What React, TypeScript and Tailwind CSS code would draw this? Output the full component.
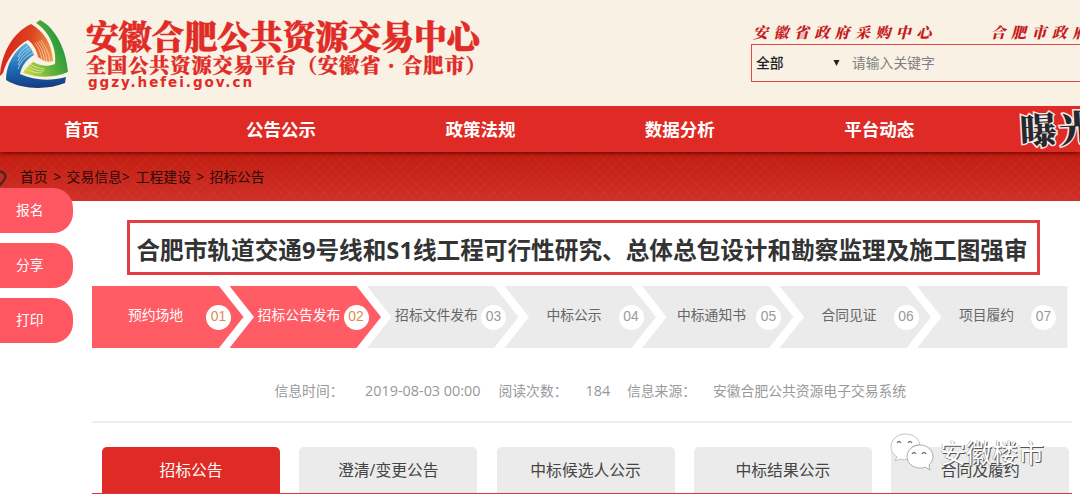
import React from 'react';
import clsx from 'clsx';

interface Step {
  label: string;
  num: string;
  active?: boolean;
}

const navItems = ['首页', '公告公示', '政策法规', '数据分析', '平台动态'];

const sideItems = ['报名', '分享', '打印'];

const steps: Step[] = [
  { label: '预约场地', num: '01', active: true },
  { label: '招标公告发布', num: '02', active: true },
  { label: '招标文件发布', num: '03' },
  { label: '中标公示', num: '04' },
  { label: '中标通知书', num: '05' },
  { label: '合同见证', num: '06' },
  { label: '项目履约', num: '07' }
];

const tabs = ['招标公告', '澄清/变更公告', '中标候选人公示', '中标结果公示', '合同及履约'];

const Logo: React.FC = () => (
  <svg width="70" height="72" viewBox="0 0 70 72" className="shrink-0">
    <defs>
      <linearGradient id="red" x1="0" y1="0.6" x2="1" y2="0.8">
        <stop offset="0" stopColor="#d6221c" />
        <stop offset="0.5" stopColor="#dd4420" />
        <stop offset="1" stopColor="#f2a048" />
      </linearGradient>
      <linearGradient id="green" x1="0" y1="0.9" x2="1" y2="0.3">
        <stop offset="0" stopColor="#cfd83e" />
        <stop offset="0.5" stopColor="#5db03a" />
        <stop offset="1" stopColor="#0f8f3c" />
      </linearGradient>
      <linearGradient id="blue" x1="0.4" y1="0" x2="0.5" y2="1">
        <stop offset="0" stopColor="#5db4e4" />
        <stop offset="0.5" stopColor="#1f70b8" />
        <stop offset="1" stopColor="#123a82" />
      </linearGradient>
    </defs>
    <path
      d="M36 4 L40 1 C54 8 66 28 68 53 C55 59 38 59 23 54 C25 50 29 46 33 43 C40 47 48 48 55 45 C57 31 50 13 36 4Z"
      fill="url(#green)"
    />
    <path
      d="M0 57 C1 36 12 14 31 5 C45 13 52 26 53 42 C48 44 43 42 38 38 C37 31 33 25 28 21 C16 27 7 40 3 54Z"
      fill="url(#red)"
    />
    <path
      d="M26 24 C30 27 32 31 34 36 C27 40 22 46 20 55 C35 62 51 62 66 58 L65 64 C48 71 22 71 6 61 C6 46 14 32 26 24Z"
      fill="url(#blue)"
    />
    <g stroke="#f9f1e4" strokeWidth="0.6" fill="none">
      <path d="M35 24 C39 29 41 35 42 41" />
      <path d="M37 23 C42 29 43 35 45 42" />
      <path d="M39 22 C44 28 46 35 47 43" />
      <path d="M41 21 C46 28 49 35 50 43" />
      <path d="M18 38 C20 33 24 29 28 27" />
      <path d="M18 42 C20 36 25 32 30 29" />
      <path d="M18 46 C21 39 25 35 31 31" />
      <path d="M18 50 C21 42 26 37 33 34" />
      <path d="M30 45 C35 48 40 50 45 50" />
      <path d="M28 47 C34 51 39 52 44 52" />
      <path d="M26 50 C32 53 37 54 42 54" />
    </g>
  </svg>
);

const Header: React.FC = () => (
  <header className="flex h-[106px] bg-[#f9f1e4]">
    <div className="w-[86px] pt-[19px]">
      <Logo />
    </div>
    <div className="flex w-[665px] flex-col pt-[16px] font-['Noto_Serif_CJK_SC','Noto_Sans_CJK_SC',serif] font-black text-[#e02b26]">
      <h1 className="text-[32.8px] leading-[38px] [-webkit-text-stroke:0.6px_#e02b26]">安徽合肥公共资源交易中心</h1>
      <div className="flex text-[20.2px] leading-[22px] tracking-[0.9px] [-webkit-text-stroke:0.3px_#e02b26]">
        <span>全国公共资源交易平台（安徽省</span>
        <span className="w-[21px] text-center">·</span>
        <span>合肥市）</span>
      </div>
      <p className="pl-[2px] font-['DejaVu_Sans'] text-[13.5px] leading-[12px] font-bold tracking-[1.95px]">
        ggzy.hefei.gov.cn
      </p>
    </div>
    <div className="flex w-[329px] flex-col overflow-hidden pt-[22px]">
      <div className="flex h-[22px] gap-[54px] pl-[2px] font-['Noto_Serif_CJK_SC','Noto_Sans_CJK_SC',serif] text-[15px] leading-[20px] font-black tracking-[5.4px] whitespace-nowrap text-[#c71a1c] italic">
        <span>安徽省政府采购中心</span>
        <span>合肥市政府采购</span>
      </div>
      <div className="flex h-[38px] w-[400px] items-center border border-solid border-[#e0474a] pl-[4px] text-[13.8px]">
        <span className="w-[77px] font-medium text-[#222]">全部</span>
        <svg width="7" height="6" viewBox="0 0 7 6">
          <path d="M0.5 0H6.5L3.5 6Z" fill="#222" />
        </svg>
        <span className="pl-[12px] text-[#808080]">请输入关键字</span>
      </div>
    </div>
  </header>
);

const Nav: React.FC = () => (
  <nav className="relative z-10 flex h-[46px] overflow-hidden bg-[#df2a25] shadow-[0_3px_3px_-1px_#7d0d07]">
    <div className="-ml-[18px] flex shrink-0">
      {navItems.map((item) => (
        <a key={item} className="flex w-[199.4px] items-center justify-center pt-px text-[17.5px] font-bold text-white">
          {item}
        </a>
      ))}
    </div>
    <span className="ml-[41px] shrink-0 -rotate-3 font-['Noto_Serif_CJK_SC','Noto_Sans_CJK_SC',serif] text-[37px] leading-[42px] font-black tracking-[2px] text-[#26282b] [-webkit-text-stroke:3px_#f7e9e6] [paint-order:stroke_fill]">
      曝光
    </span>
  </nav>
);

const Breadcrumb: React.FC = () => (
  <div className="flex h-[49px] items-center bg-[repeating-linear-gradient(45deg,#ffffff06_0_1px,transparent_1px_6px),repeating-linear-gradient(-45deg,#ffffff06_0_1px,transparent_1px_6px),linear-gradient(#c21c10,#cf3027)] pt-[2px] text-[13.8px] text-[#2a0805]">
    <svg width="20" height="20" viewBox="0 0 20 20" className="shrink-0">
      <path d="M-6 8 A6 6 0 0 1 5.5 8 C5.5 12 2 14 -1 18" fill="none" stroke="#4a2522" strokeWidth="2.4" />
    </svg>
    <span>首页</span>
    <span className="w-[19px] text-center">&gt;</span>
    <span>交易信息</span>
    <span className="w-[14px]">&gt;</span>
    <span>工程建设</span>
    <span className="w-[18.5px] text-center">&gt;</span>
    <span>招标公告</span>
  </div>
);

const SideButtons: React.FC = () => (
  <aside className="absolute top-[188px] left-0 z-20 flex flex-col gap-[10px]">
    {sideItems.map((item) => (
      <button
        key={item}
        className="h-[45px] w-[73px] rounded-r-[20px] bg-[#ff5761] pl-[16px] text-left text-[13.8px] text-white"
      >
        {item}
      </button>
    ))}
  </aside>
);

const StepItem: React.FC<{ step: Step; index: number }> = ({ step, index }) => {
  const first = index === 0;
  const last = index === steps.length - 1;

  return (
    <li
      className={clsx(
        'relative -mr-[14px] flex h-[62px] w-[151.5px] shrink-0 items-center',
        step.active ? 'bg-[#ff5c66] text-white' : 'bg-[#ebebeb] text-[#666]',
        first && '[clip-path:polygon(0_0,127px_0,151.5px_50%,127px_100%,0_100%)]',
        last && '[clip-path:polygon(0_0,150.5px_0,150.5px_100%,0_100%,24.5px_50%)]',
        !first && !last && '[clip-path:polygon(0_0,127px_0,151.5px_50%,127px_100%,0_100%,24.5px_50%)]'
      )}
    >
      <span
        className={clsx(
          'pb-[3px] text-center text-[13.8px] whitespace-nowrap',
          first ? 'mr-[-13px] w-[127px]' : 'mr-[-25px] w-[139px]'
        )}
      >
        {step.label}
      </span>
      <span
        className={clsx(
          "flex h-[25px] w-[25px] items-center justify-center rounded-full bg-white font-['Liberation_Sans'] text-[13.8px]",
          step.active ? 'text-[#df8a4e]' : 'text-[#999]'
        )}
      >
        {step.num}
      </span>
    </li>
  );
};

const Meta: React.FC = () => (
  <div className="mt-[27px] flex h-[48px] border-b-2 border-solid border-[#eee] pl-[182.5px] text-[13.8px] leading-[32px] whitespace-nowrap text-[#999]">
    <span className="w-[90.5px]">信息时间：</span>
    <span className="w-[133.5px] text-[14.4px]">2019-08-03 00:00</span>
    <span className="w-[87px]">阅读次数：</span>
    <span className="w-[41.5px] text-[14.4px]">184</span>
    <span className="w-[86px]">信息来源：</span>
    <span>安徽合肥公共资源电子交易系统</span>
  </div>
);

const Watermark: React.FC = () => (
  <div className="absolute top-[432px] left-[889px] z-20 flex">
    <svg width="45" height="40" viewBox="0 0 45 40" className="shrink-0">
      <path
        d="M16 2 C8 2 2 8 2 15 C2 19 4 22 8 25 L6 29 L12 27 C14 28 17 28 19 27 C18 18 24 12 31 13 C30 6 24 2 16 2Z"
        fill="#fff"
        stroke="#b5b5b5"
        strokeWidth="0.8"
      />
      <path
        d="M31 13 C24 13 18 18 18 25 C18 31 24 36 31 36 C33 36 35 36 36 35 L41 38 L40 33 C42 31 44 28 44 25 C44 18 38 13 31 13Z"
        fill="#fff"
        stroke="#999"
        strokeWidth="0.8"
      />
      <g fill="none" stroke="#777" strokeWidth="1.3">
        <path d="M8 11 Q10 8 12 11" />
        <path d="M19 11 Q21 8 23 11" />
        <path d="M23 22 Q25 19 27 22" />
        <path d="M33 22 Q35 19 37 22" />
      </g>
    </svg>
    <span className="pl-[6px] text-[26px] leading-[43px] text-white [text-shadow:1px_1px_0_#555,-0.5px_-0.5px_0_#888]">
      安徽楼市
    </span>
  </div>
);

export default function App() {
  return (
    <div className="relative h-[501px] w-[1080px] overflow-hidden bg-white font-['Open_Sans','Noto_Sans_CJK_SC',sans-serif]">
      <Header />
      <Nav />
      <Breadcrumb />
      <SideButtons />

      <main className="w-[1072px] pt-[19px] pl-[92px]">
        <h2 className="ml-[35px] flex h-[55px] w-[913px] items-center justify-center border-3 border-solid border-[#e03e43] pt-[6px] pr-[3px] text-[23.65px] font-bold whitespace-nowrap text-[#333]">
          合肥市轨道交通9号线和S1线工程可行性研究、总体总包设计和勘察监理及施工图强审
        </h2>

        <ul className="mt-[11px] flex">
          {steps.map((step, index) => (
            <StepItem key={step.num} step={step} index={index} />
          ))}
        </ul>

        <Meta />

        <div className="mt-[24px] flex gap-[19.3px] pl-[10px]">
          {tabs.map((tab, index) => (
            <button
              key={tab}
              className={clsx(
                'h-[46px] w-[178px] shrink-0 rounded-t-[5px] pt-[2px] text-[15.8px]',
                index === 0 ? 'bg-[#df2a25] text-white' : 'bg-[#ebebeb] text-[#444]'
              )}
            >
              {tab}
            </button>
          ))}
        </div>
        <div className="h-px bg-[#d23a40]" />
      </main>

      <Watermark />
    </div>
  );
}
